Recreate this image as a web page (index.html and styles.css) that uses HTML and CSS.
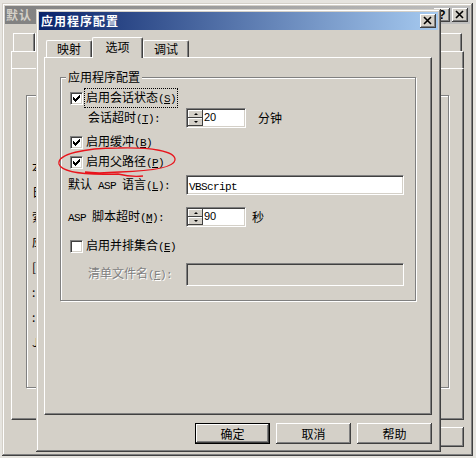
FILE: index.html
```html
<!DOCTYPE html>
<html lang="zh-CN">
<head>
  <meta charset="UTF-8">
  <title>应用程序配置</title>
  <link rel="stylesheet" href="styles.css">
</head>
<body>
  <!-- window behind -->
  <div class="window back">
    <div class="caption inactive">
      <span class="caption-text">默认</span>
      <button class="cap-btn help">?</button>
      <button class="cap-btn">
        <svg width="16" height="14" viewBox="0 0 16 14"><path d="M4 3 L11 10 M11 3 L4 10" stroke="#000" stroke-width="1.6"/></svg>
      </button>
    </div>
    <div class="tab-row row1">
      <div class="btab first"></div>
      <div class="btab"></div>
      <div class="btab"></div>
      <div class="btab"></div>
      <div class="btab"></div>
    </div>
    <div class="tab-row row2">
      <div class="btab"></div>
      <div class="btab"></div>
      <div class="btab"></div>
      <div class="btab"></div>
      <div class="btab"></div>
    </div>
    <div class="back-panel">
      <div class="back-frame">
        <div class="back-line">本</div>
        <div class="back-line">日</div>
        <div class="back-line">索</div>
        <div class="back-line">应</div>
        <div class="back-line">[</div>
        <div class="back-line">:</div>
        <div class="back-line">:</div>
        <div class="back-line">J</div>
      </div>
    </div>
    <div class="back-buttons">
      <button class="btn"></button>
      <button class="btn"></button>
      <button class="btn"></button>
      <button class="btn"></button>
    </div>
  </div>

  <!-- dialog -->
  <div class="window dialog">
    <div class="caption">
      <span class="caption-text">应用程序配置</span>
      <button class="cap-btn">
        <svg width="16" height="14" viewBox="0 0 16 14"><path d="M4 3 L11 10 M11 3 L4 10" stroke="#000" stroke-width="1.6"/></svg>
      </button>
    </div>

    <div class="tabs">
      <div class="tab">映射</div>
      <div class="tab sel">选项</div>
      <div class="tab">调试</div>
    </div>

    <div class="panel">
      <fieldset class="group">
        <legend>应用程序配置</legend>

        <div class="row">
          <span class="check on"><svg width="11" height="11" viewBox="1 1 11 11"><path d="M3 5H4V6H5V7H6V6H7V5H8V4H9V3H10V6H9V7H8V8H7V9H6V10H5V9H4V8H3Z" fill="#000" shape-rendering="crispEdges"/></svg></span>
          <span class="focus">启用会话状态<span class="en">(<u>S</u>)</span></span>
        </div>

        <div class="row tall gap-1">
          <span class="label indent">会话超时<span class="en">(<u>T</u>):</span></span>
          <div class="spin">
            <div class="spin-btns"><span class="spin-btn up"></span><span class="spin-btn down"></span></div>
            <span class="spin-val">20</span>
          </div>
          <span class="unit">分钟</span>
        </div>

        <div class="row gap-5">
          <span class="check on"><svg width="11" height="11" viewBox="1 1 11 11"><path d="M3 5H4V6H5V7H6V6H7V5H8V4H9V3H10V6H9V7H8V8H7V9H6V10H5V9H4V8H3Z" fill="#000" shape-rendering="crispEdges"/></svg></span>
          <span>启用缓冲<span class="en">(<u>B</u>)</span></span>
        </div>

        <div class="row gap-4">
          <span class="check on"><svg width="11" height="11" viewBox="1 1 11 11"><path d="M3 5H4V6H5V7H6V6H7V5H8V4H9V3H10V6H9V7H8V8H7V9H6V10H5V9H4V8H3Z" fill="#000" shape-rendering="crispEdges"/></svg></span>
          <span>启用父路径<span class="en">(<u>P</u>)</span></span>
        </div>

        <div class="row tall gap-4">
          <span class="label">默认<span class="en"> ASP </span>语言<span class="en">(<u>L</u>):</span></span>
          <div class="edit"><span class="en">VBScript</span></div>
        </div>

        <div class="row tall gap-10">
          <span class="label"><span class="en">ASP </span>脚本超时<span class="en">(<u>M</u>):</span></span>
          <div class="spin">
            <div class="spin-btns"><span class="spin-btn up"></span><span class="spin-btn down"></span></div>
            <span class="spin-val">90</span>
          </div>
          <span class="unit short">秒</span>
        </div>

        <div class="row gap-10">
          <span class="check"></span>
          <span>启用并排集合<span class="en">(<u>E</u>)</span></span>
        </div>

        <div class="row tall gap-9">
          <span class="label indent dim">清单文件名<span class="en">(<u>F</u>):</span></span>
          <div class="edit disabled"></div>
        </div>
      </fieldset>
    </div>

    <div class="buttons">
      <button class="btn default">确定</button>
      <button class="btn">取消</button>
      <button class="btn">帮助</button>
    </div>
  </div>

  <!-- red hand-drawn mark -->
  <svg class="mark" width="476" height="458" viewBox="0 0 476 458">
    <path d="M143 176 C133 177 126 176 118 174 C90 175 62 173 59 164 C57 154 85 148 118 148 C150 147 176 151 175 160 C174 168 150 171 120 172 C105 173 92 173 85 172" fill="none" stroke="#e8141c" stroke-width="1.3"/>
  </svg>
</body>
</html>
```

FILE: styles.css
```css
* {
  box-sizing: border-box;
}

body {
  margin: 0;
  width: 476px;
  height: 458px;
  position: relative;
  overflow: hidden;
  background-color: #e6e4df;
  font-family: "Noto Sans CJK SC", sans-serif;
  font-size: 12px;
  line-height: 14px;
  color: #000;
}

button {
  font: inherit;
  color: inherit;
  padding: 0;
  border: 0;
}

.en {
  font-family: "Liberation Mono", monospace;
  font-size: 11px;
  letter-spacing: -0.6px;
}

/* windows */
.window {
  position: absolute;
  display: flex;
  flex-direction: column;
  background-color: #d4d0c8;
  box-shadow: inset -1px -1px #404040, inset 1px 1px #d4d0c8, inset -2px -2px #808080, inset 2px 2px #fff;
}

.back {
  left: 2px;
  top: 3px;
  width: 471px;
  height: 453px;
}

.dialog {
  left: 36px;
  top: 9px;
  width: 405px;
  height: 443px;
}

.caption {
  display: flex;
  align-items: center;
  height: 18px;
  margin: 3px 3px 0;
  padding-left: 2px;
  background: linear-gradient(to right, #0a246a, #a6caf0);
  color: #fff;
  font-weight: bold;
}

.caption.inactive {
  background: linear-gradient(to right, #808080, #c0c0c0);
  color: #d4d0c8;
  padding-left: 1px;
}

.caption-text {
  flex: 1;
  letter-spacing: 1px;
  white-space: nowrap;
}

.cap-btn {
  width: 16px;
  height: 14px;
  margin-right: 2px;
  display: flex;
  align-items: center;
  justify-content: center;
  background-color: #d4d0c8;
  box-shadow: inset -1px -1px #404040, inset 1px 1px #fff, inset -2px -2px #808080;
  font-family: "Liberation Sans", sans-serif;
  font-weight: bold;
  font-size: 12px;
  color: #000;
}

.cap-btn svg {
  display: block;
}

/* background window parts */
.tab-row {
  display: flex;
}

.row1 {
  height: 18px;
  margin: 9px 11px 0 11px;
}

.row2 {
  height: 17px;
  margin: 0 9px;
}

.btab {
  flex: 1;
  border-top: 1px solid #fff;
  border-left: 1px solid #fff;
  border-right: 1px solid #404040;
  box-shadow: inset -1px 0 #808080;
}

.btab.first {
  flex: none;
  width: 22px;
}

.back-panel {
  height: 352px;
  margin: 0 9px;
  padding: 26px 14px 0 14px;
  border-top: 1px solid #fff;
  border-left: 1px solid #fff;
  border-right: 1px solid #404040;
  border-bottom: 1px solid #404040;
  box-shadow: inset -1px -1px #808080;
}

.back-frame {
  height: 293px;
  padding: 64px 0 0 5px;
  display: flex;
  flex-direction: column;
  gap: 11px;
  border: 1px solid #808080;
  box-shadow: inset 1px 1px #fff, 1px 1px #fff;
}

.back-line {
  height: 14px;
  white-space: nowrap;
}

.back-buttons {
  display: flex;
  justify-content: flex-end;
  gap: 6px;
  margin: 7px 9px 0 0;
}

.back-buttons .btn {
  height: 20px;
}

/* dialog tabs */
.tabs {
  display: flex;
  align-items: flex-end;
  height: 20px;
  margin: 7px 0 0 10px;
}

.tab {
  width: 46px;
  height: 17px;
  line-height: 15px;
  text-align: center;
  border-top: 1px solid #fff;
  border-left: 1px solid #fff;
  border-right: 1px solid #404040;
  border-radius: 2px 2px 0 0;
  box-shadow: inset -1px 0 #808080;
}

.tab.sel {
  width: 51px;
  height: 21px;
  line-height: 17px;
  margin-bottom: -1px;
  position: relative;
  z-index: 1;
  background-color: #d4d0c8;
}

.panel {
  height: 358px;
  margin: 0 9px 0 8px;
  padding: 12px 15px 0 15px;
  border-top: 1px solid #fff;
  border-left: 1px solid #fff;
  border-right: 1px solid #404040;
  border-bottom: 1px solid #404040;
  box-shadow: inset -1px -1px #808080;
}

.group {
  margin: 0;
  min-width: 0;
  padding: 6px 0 15px 7px;
  border: 1px solid #808080;
  box-shadow: inset 1px 1px #fff, 1px 1px #fff;
}

.group legend {
  padding: 0 2px;
  margin-left: -2px;
  line-height: 14px;
  background-color: #d4d0c8;
}

.row {
  display: flex;
  align-items: center;
  height: 16px;
  white-space: nowrap;
}

.row.tall {
  height: 22px;
}

.gap-1 { margin-top: 1px; }
.gap-4 { margin-top: 4px; }
.gap-5 { margin-top: 5px; }
.gap-9 { margin-top: 9px; }
.gap-10 { margin-top: 10px; }

.check {
  flex: none;
  width: 13px;
  height: 13px;
  margin: 0 3px 0 2px;
  background-color: #fff;
  border: 1px solid;
  border-color: #808080 #fff #fff #808080;
  box-shadow: inset 1px 1px #404040, inset -1px -1px #d4d0c8;
}

.check svg {
  display: block;
}

.focus {
  outline: 1px dotted #000;
  outline-offset: 1px;
}

.label {
  flex: none;
  width: 118px;
}

.label.indent {
  padding-left: 20px;
}

.dim {
  color: #808080;
  text-shadow: 1px 1px #fff;
}

.unit {
  margin-left: 12px;
}

.unit.short {
  margin-left: 6px;
}

/* spinner and edits */
.spin {
  display: flex;
  width: 60px;
  height: 20px;
  background-color: #fff;
  border: 1px solid;
  border-color: #808080 #fff #fff #808080;
  box-shadow: inset 1px 1px #404040, inset -1px -1px #d4d0c8;
}

.spin-btns {
  display: flex;
  flex-direction: column;
  width: 15px;
  margin: 1px 0 1px 1px;
}

.spin-btn {
  height: 8px;
  display: flex;
  align-items: center;
  justify-content: center;
  background-color: #d4d0c8;
  box-shadow: inset -1px -1px #404040, inset 1px 1px #fff;
}

.spin-btn::after {
  content: "";
  border-style: solid;
  border-color: transparent;
}

.spin-btn.up::after {
  border-width: 0 2px 2px;
  border-bottom-color: #000;
}

.spin-btn.down::after {
  border-width: 2px 2px 0;
  border-top-color: #000;
}

.spin-val {
  align-self: flex-start;
  padding: 1px 0 0 1px;
  font-family: "Liberation Sans", sans-serif;
  font-size: 11px;
}

.edit {
  width: 218px;
  height: 20px;
  padding: 2px 0 0 2px;
  background-color: #fff;
  border: 1px solid;
  border-color: #808080 #fff #fff #808080;
  box-shadow: inset 1px 1px #404040, inset -1px -1px #d4d0c8;
}

.edit.disabled {
  height: 23px;
  background-color: #d4d0c8;
}

/* buttons */
.buttons {
  display: flex;
  justify-content: flex-end;
  gap: 6px;
  margin: 8px 9px 0 0;
}

.btn {
  width: 75px;
  height: 21px;
  background-color: #d4d0c8;
  box-shadow: inset -1px -1px #404040, inset 1px 1px #fff, inset -2px -2px #808080;
}

.btn.default {
  border: 1px solid #000;
}

.mark {
  position: absolute;
  left: 0;
  top: 0;
  pointer-events: none;
}
```
